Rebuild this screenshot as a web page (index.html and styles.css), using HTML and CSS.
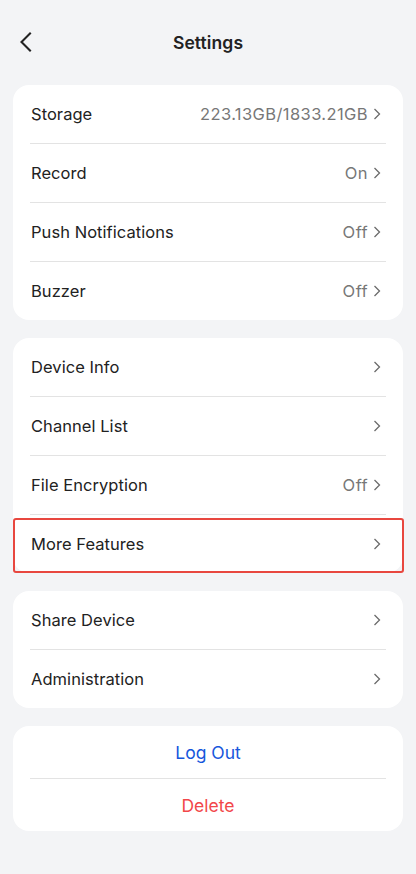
FILE: index.html
```html
<!DOCTYPE html>
<html>
<head>
<meta charset="utf-8">
<link rel="stylesheet" href="styles.css">
</head>
<body>
<div class="page">
  <header class="header">
    <span class="back">
      <svg width="14" height="20" viewBox="0 0 14 20"><path d="M11 1.5 L2.5 10 L11 18.5" fill="none" stroke="#222" stroke-width="2.1" stroke-linecap="square"/></svg>
    </span>
    <h1 class="title">Settings</h1>
  </header>

  <section class="card">
    <div class="row"><span class="label">Storage</span><span class="value">223.13GB/1833.21GB<svg class="chev" width="8" height="12" viewBox="0 0 8 12"><path d="M1.5 1 L6.5 6 L1.5 11" fill="none" stroke="#6b6b6b" stroke-width="1.3"/></svg></span></div>
    <div class="sep"></div>
    <div class="row"><span class="label">Record</span><span class="value">On<svg class="chev" width="8" height="12" viewBox="0 0 8 12"><path d="M1.5 1 L6.5 6 L1.5 11" fill="none" stroke="#6b6b6b" stroke-width="1.3"/></svg></span></div>
    <div class="sep"></div>
    <div class="row"><span class="label">Push Notifications</span><span class="value">Off<svg class="chev" width="8" height="12" viewBox="0 0 8 12"><path d="M1.5 1 L6.5 6 L1.5 11" fill="none" stroke="#6b6b6b" stroke-width="1.3"/></svg></span></div>
    <div class="sep"></div>
    <div class="row"><span class="label">Buzzer</span><span class="value">Off<svg class="chev" width="8" height="12" viewBox="0 0 8 12"><path d="M1.5 1 L6.5 6 L1.5 11" fill="none" stroke="#6b6b6b" stroke-width="1.3"/></svg></span></div>
  </section>

  <section class="card">
    <div class="row"><span class="label">Device Info</span><span class="value"><svg class="chev" width="8" height="12" viewBox="0 0 8 12"><path d="M1.5 1 L6.5 6 L1.5 11" fill="none" stroke="#6b6b6b" stroke-width="1.3"/></svg></span></div>
    <div class="sep"></div>
    <div class="row"><span class="label">Channel List</span><span class="value"><svg class="chev" width="8" height="12" viewBox="0 0 8 12"><path d="M1.5 1 L6.5 6 L1.5 11" fill="none" stroke="#6b6b6b" stroke-width="1.3"/></svg></span></div>
    <div class="sep"></div>
    <div class="row"><span class="label">File Encryption</span><span class="value">Off<svg class="chev" width="8" height="12" viewBox="0 0 8 12"><path d="M1.5 1 L6.5 6 L1.5 11" fill="none" stroke="#6b6b6b" stroke-width="1.3"/></svg></span></div>
    <div class="sep"></div>
    <div class="row highlighted"><span class="label">More Features</span><span class="value"><svg class="chev" width="8" height="12" viewBox="0 0 8 12"><path d="M1.5 1 L6.5 6 L1.5 11" fill="none" stroke="#6b6b6b" stroke-width="1.3"/></svg></span></div>
  </section>

  <section class="card">
    <div class="row"><span class="label">Share Device</span><span class="value"><svg class="chev" width="8" height="12" viewBox="0 0 8 12"><path d="M1.5 1 L6.5 6 L1.5 11" fill="none" stroke="#6b6b6b" stroke-width="1.3"/></svg></span></div>
    <div class="sep"></div>
    <div class="row"><span class="label">Administration</span><span class="value"><svg class="chev" width="8" height="12" viewBox="0 0 8 12"><path d="M1.5 1 L6.5 6 L1.5 11" fill="none" stroke="#6b6b6b" stroke-width="1.3"/></svg></span></div>
  </section>

  <section class="card">
    <div class="action logout">Log Out</div>
    <div class="sep"></div>
    <div class="action delete">Delete</div>
  </section>
</div>
</body>
</html>
```

FILE: styles.css
```css
* { box-sizing: border-box; }
html, body {
  margin: 0;
  padding: 0;
  background: #f3f4f6;
}
body {
  font-family: Inter, "Noto Sans", "Liberation Sans", sans-serif;
  color: #222;
  width: 416px;
  height: 874px;
  overflow: hidden;
}
.page {
  padding: 0 13px 0 13px;
  display: flex;
  flex-direction: column;
  gap: 18px;
}
.header {
  height: 85px;
  margin-bottom: -18px;
  display: flex;
  align-items: center;
  justify-content: center;
  position: relative;
}
.back {
  position: absolute;
  left: 6px;
  top: 32px;
  width: 14px;
  height: 20px;
  display: block;
}
.back svg { display: block; }
.title {
  margin: 0;
  font-size: 17.5px;
  font-weight: 600;
  color: #222;
  letter-spacing: 0.1px;
}
.card {
  background: #fff;
  border-radius: 16px;
  display: flex;
  flex-direction: column;
}
.row {
  height: 58px;
  display: flex;
  align-items: center;
  justify-content: space-between;
  padding: 0 22px 0 18px;
  position: relative;
}
.label {
  font-size: 16.5px;
  color: #222;
  letter-spacing: 0.05px;
}
.value {
  display: flex;
  align-items: center;
  gap: 5px;
  font-size: 16.5px;
  letter-spacing: 0.4px;
  color: #777;
}
.chev { display: block; }
.sep {
  height: 1px;
  background: #e3e3e3;
  margin: 0 17px;
}
.highlighted::after {
  content: "";
  position: absolute;
  left: 0;
  right: -1px;
  top: 3px;
  bottom: 0;
  border: 2px solid #e8473f;
  border-radius: 3px;
}
.action {
  height: 52px;
  display: flex;
  align-items: center;
  justify-content: center;
  font-size: 17.5px;
  font-weight: 400;
  padding-top: 1px;
}
.logout { color: #1656dc; }
.delete { color: #f2474a; }
```
